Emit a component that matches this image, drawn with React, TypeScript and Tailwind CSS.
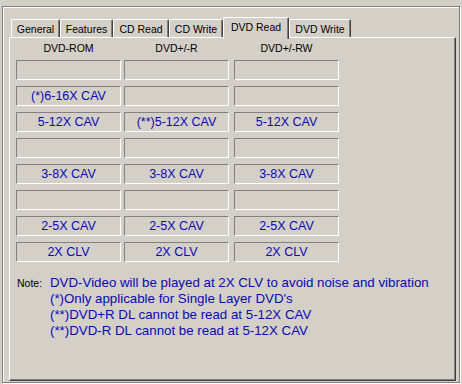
const tabs = [
  { label: 'General', w: 'w-[49px]' },
  { label: 'Features', w: 'w-[53px]' },
  { label: 'CD Read', w: 'w-[56px]' },
  { label: 'CD Write', w: 'w-[54px]' },
  { label: 'DVD Read', w: 'w-[66px]', active: true },
  { label: 'DVD Write', w: 'w-[62px]' },
];

const headers = ['DVD-ROM', 'DVD+/-R', 'DVD+/-RW'];

const rows: string[][] = [
  ['', '', ''],
  ['(*)6-16X CAV', '', ''],
  ['5-12X CAV', '(**)5-12X CAV', '5-12X CAV'],
  ['', '', ''],
  ['3-8X CAV', '3-8X CAV', '3-8X CAV'],
  ['', '', ''],
  ['2-5X CAV', '2-5X CAV', '2-5X CAV'],
  ['2X CLV', '2X CLV', '2X CLV'],
];

const notes = [
  'DVD-Video will be played at 2X CLV to avoid noise and vibration',
  "(*)Only applicable for Single Layer DVD's",
  '(**)DVD+R DL cannot be read at 5-12X CAV',
  '(**)DVD-R DL cannot be read at 5-12X CAV',
];

// column offsets: 3px between first two, 5px before the third
const colGap = ['', 'ml-[3px]', 'ml-[5px]'];

export default function App() {
  return (
    <div className="w-[462px] h-[384px] bg-[#d4d0c8] overflow-hidden font-['Liberation_Sans',Arial,sans-serif] text-black">
      {/* etched outer frame */}
      <div className="ml-[2px] mt-[6px] w-[458px] h-[377px] border border-[#808080] shadow-[inset_1px_1px_0_#ffffff,1px_1px_0_#ffffff] pl-[6px] pt-[10px]">
        {/* tab strip */}
        <div className="flex h-[20px] pl-[2px]">
          {tabs.map((t) =>
            t.active ? (
              <div
                key={t.label}
                className={`${t.w} relative z-10 self-end h-[22px] -mb-[2px] -ml-0 bg-[#d4d0c8] border-l border-t border-r border-l-white border-t-white border-r-[#404040] shadow-[inset_-1px_0_0_#808080] rounded-t-[2px] flex justify-center pt-[3px] text-[10.5px] leading-[13px]`}
              >
                {t.label}
              </div>
            ) : (
              <div
                key={t.label}
                className={`${t.w} self-end h-[18px] bg-[#d4d0c8] border-l border-t border-r border-l-white border-t-white border-r-[#404040] shadow-[inset_-1px_0_0_#808080] rounded-t-[2px] flex justify-center pt-[3px] text-[10.5px] leading-[13px]`}
              >
                {t.label}
              </div>
            )
          )}
        </div>

        {/* tab page */}
        <div className="w-[447px] h-[344px] border border-l-white border-t-white border-r-[#404040] border-b-[#404040] shadow-[inset_-1px_-1px_0_#808080] pt-[3px] pl-[6px]">
          <div className="flex h-[14px]">
            {headers.map((h, i) => (
              <div key={h} className={`${colGap[i]} w-[105px] text-center text-[10.5px] leading-[14px]`}>
                {h}
              </div>
            ))}
          </div>

          <div className="mt-[5px] flex flex-col gap-[6px]">
            {rows.map((r, ri) => (
              <div key={ri} className="flex">
                {r.map((v, ci) => (
                  <div
                    key={ci}
                    className={`${colGap[ci]} w-[105px] h-[20px] border border-t-[#808080] border-l-[#808080] border-b-white border-r-white flex items-center justify-center text-[12.5px] leading-[14px] text-[#0a0ab0]`}
                  >
                    {v}
                  </div>
                ))}
              </div>
            ))}
          </div>

          <div className="mt-[13px] flex items-baseline pl-[1px]">
            <div className="w-[33px] text-[10.5px] leading-[16px]">Note:</div>
            <div className="flex flex-col text-[13.3px] leading-[16px] text-[#0a0ab0]">
              {notes.map((n) => (
                <div key={n}>{n}</div>
              ))}
            </div>
          </div>
        </div>
      </div>
    </div>
  );
}
